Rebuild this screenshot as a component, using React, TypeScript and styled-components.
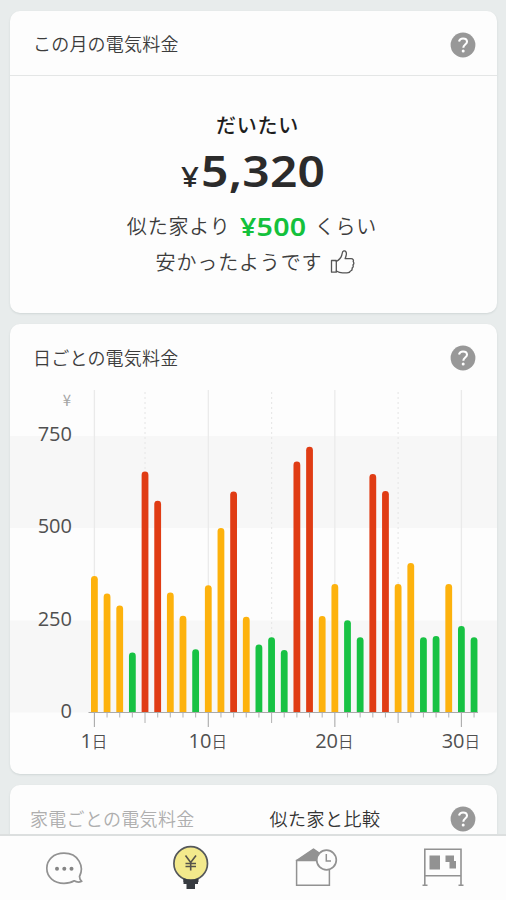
import React from 'react';
import styled, { createGlobalStyle } from 'styled-components';

const GlobalStyle = createGlobalStyle`
  * { box-sizing: border-box; }
  body {
    margin: 0;
    background: #e8ecec;
    font-family: "Noto Sans", "Noto Sans CJK JP", sans-serif;
    color: #3c3c3c;
  }
`;

const Screen = styled.div`
  width: 506px;
  height: 900px;
  overflow: hidden;
  display: flex;
  flex-direction: column;
  background: #e8ecec;
`;

const Feed = styled.main`
  flex: 1;
  min-height: 0;
  overflow: hidden;
  display: flex;
  flex-direction: column;
  gap: 11px;
  padding: 11px 9px 0 10px;
`;

const Card = styled.section<{ $height: number }>`
  flex: none;
  height: ${(p) => p.$height}px;
  background: #fdfdfd;
  border-radius: 10px;
  box-shadow: 0 1px 2px rgba(90, 105, 105, 0.16);
  overflow: hidden;
`;

const CardHeader = styled.header<{ $divided?: boolean }>`
  height: 65px;
  display: flex;
  align-items: center;
  justify-content: space-between;
  padding: 4px 21px 0 23px;
  border-bottom: 1px solid ${(p) => (p.$divided ? '#e4e6e6' : 'transparent')};
`;

const CardTitle = styled.h2<{ $raise?: number }>`
  margin: 0 0 ${(p) => p.$raise ?? 2}px;
  font-size: 18px;
  line-height: 26px;
  font-weight: 350;
  letter-spacing: 0.2px;
  font-family: "Noto Sans CJK JP", sans-serif;
  white-space: nowrap;
`;

const Tabs = styled.div`
  display: flex;
  gap: 75px;
  margin-left: -3px;
`;

const Tab = styled(CardTitle)<{ $muted?: boolean }>`
  color: ${(p) => (p.$muted ? '#aeaeae' : '#333')};
  letter-spacing: ${(p) => (p.$muted ? 0.3 : 0.5)}px;
`;

const HelpButton = styled.button`
  width: 26px;
  height: 26px;
  padding: 0;
  border: 0;
  background: none;
  display: block;
  svg { display: block; }
`;

const Summary = styled.div`
  display: flex;
  flex-direction: column;
  align-items: center;
  font-family: "Noto Sans CJK JP", sans-serif;
`;

const Lead = styled.p`
  margin: 33px 0 0 8px;
  font-size: 20px;
  line-height: 32px;
  font-weight: 500;
  letter-spacing: 0.7px;
  color: #1e1e1e;
`;

const Price = styled.p`
  margin: -1px 0 0;
  height: 60px;
  display: flex;
  align-items: baseline;
  font-family: "Noto Sans", sans-serif;
  font-size: 44px;
  line-height: 60px;
  color: #2b2b2b;
`;

const Currency = styled.span`
  width: 20px;
  font-size: 27px;
  font-weight: 500;
  transform: scaleX(1.16);
  transform-origin: left;
`;

const Amount = styled.span`
  font-weight: 600;
  letter-spacing: 0.2px;
  transform: scaleX(1.09);
  transform-origin: left;
  margin-right: 11px;
`;

const Comparison = styled.p<{ $shift: number; $top: number }>`
  margin: ${(p) => p.$top}px 0 0 ${(p) => p.$shift}px;
  height: 36px;
  display: flex;
  align-items: center;
  font-size: 20px;
  line-height: 36px;
  font-weight: 350;
  letter-spacing: 0.85px;
  white-space: nowrap;
  svg { margin-left: 8px; }
`;

const Saving = styled.strong`
  width: 67px;
  margin: 0 8px 0 9px;
  font-family: "Noto Sans", sans-serif;
  font-size: 26px;
  font-weight: 600;
  letter-spacing: 0.2px;
  color: #14c13c;
  transform: scaleX(1.1);
  transform-origin: left;
`;

const ChartSvg = styled.svg`
  display: block;
  .axis {
    font-family: "Open Sans", "Noto Sans CJK JP", sans-serif;
    font-size: 20px;
    fill: #505050;
  }
  .kanji {
    font-family: "Noto Sans CJK JP", sans-serif;
    font-size: 15.5px;
    font-weight: 350;
  }
  .unit {
    font-family: "Noto Sans CJK JP", sans-serif;
    font-size: 15px;
    fill: #a5a5a5;
  }
`;

const TabBar = styled.nav`
  flex: none;
  height: 66px;
  display: grid;
  grid-template-columns: repeat(4, 1fr);
  background: #fdfdfd;
  border-top: 2px solid #dcdfdf;
`;

const TabItem = styled.button`
  border: 0;
  padding: 0;
  background: none;
  display: flex;
  justify-content: center;
  align-items: flex-start;
  svg { display: block; overflow: visible; }
`;

const Help = () => (
  <HelpButton aria-label="ヘルプ">
    <svg width="26" height="26" viewBox="0 0 26 26" fill="none">
      <circle cx="13" cy="13" r="12.4" fill="#989898" />
      <path d="M9 9.6C9.5 7.5 11 6.5 13 6.5c2.4 0 4 1.2 4 3.2 0 2.9-3.7 2.8-3.7 6" stroke="#fff" strokeWidth="2.1" />
      <circle cx="13.2" cy="19" r="1.5" fill="#fff" />
    </svg>
  </HelpButton>
);

const ThumbUp = () => (
  <svg width="25" height="26" viewBox="0 0 25 26" fill="none" stroke="#555" strokeWidth="1.3" strokeLinejoin="round" strokeLinecap="round">
    <path d="M1.5 11.5h4.8v11.7H1.5z" />
    <path d="M6.3 12.5c3-1.8 4.9-4 5.5-6.5.4-1.8.4-3.7 2-4.1 2-.5 2.9 1.7 2.5 3.8-.2 1.5-.7 2.9-1.2 4h6c2 0 2.8 1.5 2.1 2.9.8 1 .7 2.4-.3 3.3.6 1.1.3 2.4-.8 3.2.3 1.3-.4 2.5-1.6 2.9-.5 1.3-1.7 1.8-3.5 1.8h-4.5c-2.5 0-4-.5-6.2-1.8" />
  </svg>
);

const RED = '#e03c14';
const AMBER = '#fdb20d';
const GREEN = '#17c243';

const BASE = 323;
const UNIT_HEIGHT = 92.2 / 250;
const dayX = (day: number) => 84.4 + (day - 1) * 12.655;

const costs = [
  369, 321, 289, 161, 652, 573, 324, 261, 170, 344, 499, 598, 258, 183, 203, 168,
  679, 719, 260, 347, 249, 203, 645, 599, 347, 404, 203, 206, 347, 233, 203,
];

const barColor = (cost: number) => (cost > 550 ? RED : cost >= 250 ? AMBER : GREEN);

const barPath = (x: number, height: number) =>
  `M${x - 3.4} ${BASE}V${BASE - height + 3.4}a3.4 3.4 0 0 1 6.8 0V${BASE}z`;

const CostChart = () => (
  <ChartSvg width="487" height="380" viewBox="0 0 487 380">
    <rect x="0" y="47" width="487" height="92" fill="#f7f7f7" />
    <rect x="0" y="231.5" width="487" height="92" fill="#f7f7f7" />
    {[1, 10, 20, 30].map((d) => (
      <line key={d} x1={dayX(d)} x2={dayX(d)} y1="1" y2={BASE} stroke="#eaeaea" strokeWidth="1.3" />
    ))}
    {[5, 15, 25].map((d) => (
      <line key={d} x1={dayX(d)} x2={dayX(d)} y1="3" y2={BASE} stroke="#e8e8e8" strokeWidth="1.2" strokeDasharray="2 3" />
    ))}
    <text className="unit" x="61" y="17" textAnchor="end">¥</text>
    {[750, 500, 250, 0].map((value, i) => (
      <text key={value} className="axis" x="62" y={52 + i * 92.4} textAnchor="end">{value}</text>
    ))}
    {costs.map((cost, i) => (
      <path key={i} d={barPath(dayX(i + 1), cost * UNIT_HEIGHT)} fill={barColor(cost)} />
    ))}
    <line x1="78.5" x2="468" y1={BASE + 0.5} y2={BASE + 0.5} stroke="#aaa" strokeWidth="1" />
    {costs.map((_, i) => {
      const day = i + 1;
      const major = day === 1 || day % 10 === 0;
      const length = major ? 15 : day % 5 === 0 ? 11 : 5.5;
      return (
        <line key={day} x1={dayX(day)} x2={dayX(day)} y1={BASE + 1} y2={BASE + length} stroke={major ? '#aaa' : '#b8b8b8'} strokeWidth="1.1" />
      );
    })}
    {[1, 10, 20, 30].map((d) => (
      <text key={d} className="axis" x={dayX(d) - 0.5} y="358.5" textAnchor="middle">
        {d}<tspan className="kanji">日</tspan>
      </text>
    ))}
  </ChartSvg>
);

const ChatIcon = () => (
  <svg width="126" height="64" viewBox="0 0 126 64" fill="none" stroke="#929292" strokeWidth="1.7" strokeLinejoin="round">
    <path d="M79.5 40.5C84.5 30.5 78.5 17.2 64 17.2C53.5 17.2 46.8 24 46.8 32.3C46.8 41 54 47.3 64 47.3C68 47.3 71.500 46.500 74.2 44.800C76.500 46.300 79 46.500 81.800 45.300C80.200 44 79.500 42.700 79.500 40.500Z" />
    <g fill="#858585" stroke="none">
      <circle cx="57" cy="32.8" r="2" /><circle cx="64.3" cy="32.8" r="2" /><circle cx="71.5" cy="32.8" r="2" />
    </g>
  </svg>
);

const BulbIcon = () => (
  <svg width="126" height="64" viewBox="0 0 126 64" fill="none">
    <path d="M56.5 42H71V48H68V53H59.5V48H56.500Z" fill="#373b40" />
    <circle cx="63.7" cy="27.5" r="16.8" fill="#f3e98c" stroke="#55585b" strokeWidth="1.7" />
    <path d="M56.5 42.2Q64 45 71.500 42.2V46H56.500Z" fill="#373b40" />
    <path d="M58.5 19.5L63.7 26.5L69 19.5M63.7 26V34.5M58.5 27.5H69M58.5 30.5H69" stroke="#56534a" strokeWidth="1.6" />
  </svg>
);

const HouseIcon = () => (
  <svg width="126" height="64" viewBox="0 0 126 64" fill="none" stroke="#929292" strokeWidth="1.5">
    <path d="M43.5 24.5L60.5 13L77 24.5Z" fill="#929292" strokeLinejoin="round" />
    <path d="M43.6 24.5H76.4V49.3H43.6Z" fill="#fdfdfd" />
    <circle cx="73.5" cy="24" r="9.8" fill="#fdfdfd" strokeWidth="1.7" />
    <path d="M73.3 18V25H78" />
  </svg>
);

const BoardIcon = () => (
  <svg width="126" height="64" viewBox="0 0 126 64" fill="none" stroke="#929292" strokeWidth="1.6">
    <path d="M44.8 48.5V13.3H81V48.5M44.8 39.8H81M42.5 49.3H47.5M78.5 49.3H83.5" />
    <path d="M49.5 19.5H60V33.5H49.5ZM65.5 19.5H74V25H76V32.5H69.5V26H65.5Z" fill="#929292" stroke="none" />
  </svg>
);

export default function App() {
  return (
    <>
      <GlobalStyle />
      <Screen>
        <Feed>
          <Card $height={302}>
            <CardHeader $divided>
              <CardTitle $raise={4}>この月の電気料金</CardTitle>
              <Help />
            </CardHeader>
            <Summary>
              <Lead>だいたい</Lead>
              <Price><Currency>¥</Currency><Amount>5,320</Amount></Price>
              <Comparison $top={8} $shift={-3}>
                似た家より<Saving>¥500</Saving>くらい
              </Comparison>
              <Comparison $top={0} $shift={4}>
                安かったようです<ThumbUp />
              </Comparison>
            </Summary>
          </Card>
          <Card $height={450}>
            <CardHeader>
              <CardTitle>日ごとの電気料金</CardTitle>
              <Help />
            </CardHeader>
            <CostChart />
          </Card>
          <Card $height={120}>
            <CardHeader>
              <Tabs>
                <Tab $muted>家電ごとの電気料金</Tab>
                <Tab>似た家と比較</Tab>
              </Tabs>
              <Help />
            </CardHeader>
          </Card>
        </Feed>
        <TabBar>
          <TabItem aria-label="メッセージ"><ChatIcon /></TabItem>
          <TabItem aria-label="電気料金"><BulbIcon /></TabItem>
          <TabItem aria-label="家の履歴"><HouseIcon /></TabItem>
          <TabItem aria-label="掲示板"><BoardIcon /></TabItem>
        </TabBar>
      </Screen>
    </>
  );
}
